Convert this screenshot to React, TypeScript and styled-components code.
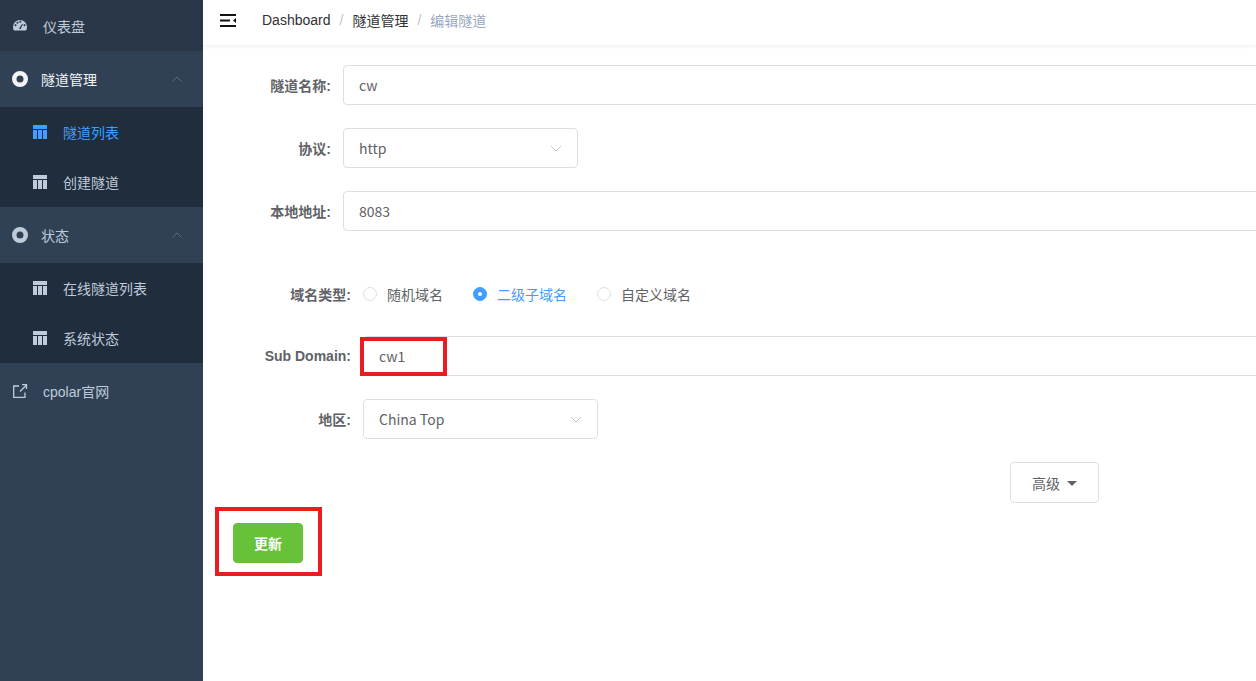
import React from 'react';
import styled, { createGlobalStyle } from 'styled-components';

const GlobalStyle = createGlobalStyle`
  html, body { margin: 0; padding: 0; height: 100%; background: #fff; }
  #root { height: 100%; }
  * { box-sizing: border-box; }
  body { font-family: "Liberation Sans", "Noto Sans CJK SC", sans-serif; overflow: hidden; }
`;

const Layout = styled.div`
  display: flex;
  width: 1256px;
  height: 681px;
  overflow: hidden;
`;

const Sidebar = styled.aside`
  width: 203px;
  flex: none;
  background: #304156;
  color: #bfcbd9;
  font-size: 14px;
`;

const TopItem = styled.div<{ $height?: number; $dark?: boolean; $offset?: number }>`
  display: flex;
  align-items: center;
  height: ${p => p.$height ?? 56}px;
  padding-left: 12px;
  background: ${p => (p.$dark ? '#2a3749' : 'transparent')};
  svg { flex: none; }
  span { margin-left: ${p => p.$offset ?? 15}px; }
`;

const GroupHead = styled.div<{ $active?: boolean }>`
  display: flex;
  align-items: center;
  height: 56px;
  padding-left: 12px;
  color: ${p => (p.$active ? '#f4f4f5' : '#bfcbd9')};
  span { margin-left: 13px; flex: 1; }
  svg:last-child { margin-right: 21px; }
`;

const SubList = styled.div`
  background: #1f2d3d;
`;

const SubItem = styled.div<{ $active?: boolean }>`
  display: flex;
  align-items: center;
  height: 50px;
  padding-left: 33px;
  color: ${p => (p.$active ? '#409eff' : '#bfcbd9')};
  span { margin-left: 16px; }
`;

const Main = styled.main`
  flex: 1;
  min-width: 0;
  position: relative;
  overflow: hidden;
`;

const Navbar = styled.header`
  display: flex;
  align-items: center;
  height: 45px;
  padding: 0 0 5px 17px;
  box-shadow: 0 1px 4px rgba(0, 21, 41, 0.08);
  font-size: 14px;
`;

const Crumbs = styled.nav`
  display: flex;
  align-items: center;
  margin-left: 25px;
  color: #303133;
`;

const Slash = styled.span`
  margin: 0 9px;
  color: #c0c4cc;
`;

const CurrentCrumb = styled.span`
  color: #97a8be;
`;

const Form = styled.form`
  padding-top: 20px;
  font-family: "Noto Sans CJK SC", "Noto Sans", sans-serif;
  font-size: 14px;
`;

const Row = styled.div<{ $gap?: number }>`
  display: flex;
  align-items: center;
  height: 40px;
  margin-bottom: ${p => p.$gap ?? 23}px;
`;

const Label = styled.label<{ $width: number }>`
  flex: none;
  width: ${p => p.$width}px;
  padding-right: 12px;
  text-align: right;
  font-weight: 700;
  color: #606266;
  font-family: "Liberation Sans", "Noto Sans CJK SC", sans-serif;
`;

const Input = styled.div`
  flex: 1;
  height: 40px;
  margin-right: -20px;
  padding: 0 15px;
  display: flex;
  align-items: center;
  background: #fff;
  border: 1px solid #dcdfe6;
  border-radius: 4px;
  color: #606266;
`;

const Select = styled.div`
  width: 235px;
  height: 40px;
  padding: 0 15px;
  display: flex;
  align-items: center;
  justify-content: space-between;
  border: 1px solid #dcdfe6;
  border-radius: 4px;
  color: #606266;
`;

const RadioGroup = styled.div`
  display: flex;
  gap: 30px;
`;

const Radio = styled.div<{ $checked?: boolean }>`
  display: flex;
  align-items: center;
  gap: 10px;
  color: ${p => (p.$checked ? '#409eff' : '#606266')};
`;

const RadioDot = styled.i<{ $checked?: boolean }>`
  display: flex;
  align-items: center;
  justify-content: center;
  width: 14px;
  height: 14px;
  border-radius: 50%;
  border: 1px solid ${p => (p.$checked ? '#409eff' : '#dcdfe6')};
  background: ${p => (p.$checked ? '#409eff' : '#fff')};
  &::after {
    content: '';
    width: 4px;
    height: 4px;
    border-radius: 50%;
    background: #fff;
  }
`;

const AdvancedRow = styled.div`
  display: flex;
  justify-content: flex-end;
  padding-right: 157px;
  margin-bottom: 20px;
`;

const AdvancedButton = styled.button`
  display: flex;
  align-items: center;
  justify-content: center;
  gap: 7px;
  width: 89px;
  height: 41px;
  padding: 0;
  background: #fff;
  border: 1px solid #dcdfe6;
  border-radius: 4px;
  color: #606266;
  font: inherit;
`;

const Caret = styled.i`
  width: 0;
  height: 0;
  margin-top: 1px;
  border-left: 5px solid transparent;
  border-right: 5px solid transparent;
  border-top: 5px solid #606266;
`;

const UpdateButton = styled.button`
  display: block;
  width: 70px;
  height: 40px;
  margin-left: 30px;
  padding: 0;
  background: #67c23a;
  border: 1px solid #67c23a;
  border-radius: 4px;
  color: #fff;
  font: inherit;
  font-weight: 700;
`;

const Highlight = styled.div<{ $left: number; $top: number; $width: number; $height: number }>`
  position: absolute;
  left: ${p => p.$left}px;
  top: ${p => p.$top}px;
  width: ${p => p.$width}px;
  height: ${p => p.$height}px;
  border: 4px solid #e91c20;
  pointer-events: none;
`;

const GaugeIcon = () => (
  <svg width="16" height="14" viewBox="0 0 16 14">
    <path
      fill="#bfcbd9"
      fillRule="evenodd"
      d="M8 1a7 7 0 0 0-7 7c0 1.400.3 2.500 1 3.500h12c.7-1 1-2.100 1-3.500a7 7 0 0 0-7-7zM3.500 7.200a1 1 0 1 1 .01 0zM5.500 4.700a1 1 0 1 1 .01 0zM8.300 3.800a1 1 0 1 1 .01 0zM12.500 7.200a1 1 0 1 1 .01 0zM7 9.500l3.300-4.800.7.400-2.500 5.200z"
    />
  </svg>
);

const RingIcon = ({ color }: { color: string }) => (
  <svg width="16" height="16" viewBox="0 0 16 16">
    <path
      fill={color}
      fillRule="evenodd"
      d="M8 0a8 8 0 1 0 0 16A8 8 0 0 0 8 0zm0 4.500a3.500 3.500 0 1 1 0 7 3.500 3.500 0 0 1 0-7z"
    />
  </svg>
);

const TableIcon = ({ color }: { color: string }) => (
  <svg width="14" height="14" viewBox="0 0 14 14">
    <path fill={color} d="M0 0h14v4H0zM0 5h4v9H0zM5 5h4v9H5zM10 5h4v9h-4z" />
  </svg>
);

const LinkIcon = () => (
  <svg width="16" height="16" viewBox="0 0 16 16" fill="none" stroke="#bfcbd9" strokeWidth="1.300">
    <path d="M7 3H1.700v11.300H13V9.500M8 8.500L14 2.500M10 1.700h4.500v4.300" />
  </svg>
);

const Chevron = ({ color }: { color: string }) => (
  <svg width="10" height="6" viewBox="0 0 10 6" fill="none" stroke={color} strokeWidth="1">
    <path d="M.5 5.500L5 1l4.500 4.500" />
  </svg>
);

const SelectArrow = () => (
  <svg width="12" height="7" viewBox="0 0 12 7" fill="none" stroke="#c0c4cc" strokeWidth="1">
    <path d="M1 1l5 5 5-5" />
  </svg>
);

const MenuToggle = () => (
  <svg width="17" height="15" viewBox="0 0 17 15">
    <path
      fill="#111"
      d="M0 1h16v2H0zM0 6.500h10v2H0zM0 12h16v2H0zM16 5v5l-3-2.500z"
    />
  </svg>
);

export default function App() {
  return (
    <Layout>
      <GlobalStyle />
      <Sidebar>
        <TopItem $height={51} $dark>
          <GaugeIcon />
          <span>仪表盘</span>
        </TopItem>
        <GroupHead $active>
          <RingIcon color="#f4f4f5" />
          <span>隧道管理</span>
          <Chevron color="#5d6b7d" />
        </GroupHead>
        <SubList>
          <SubItem $active>
            <TableIcon color="#409eff" />
            <span>隧道列表</span>
          </SubItem>
          <SubItem>
            <TableIcon color="#bfcbd9" />
            <span>创建隧道</span>
          </SubItem>
        </SubList>
        <GroupHead>
          <RingIcon color="#bfcbd9" />
          <span>状态</span>
          <Chevron color="#5d6b7d" />
        </GroupHead>
        <SubList>
          <SubItem>
            <TableIcon color="#bfcbd9" />
            <span>在线隧道列表</span>
          </SubItem>
          <SubItem>
            <TableIcon color="#bfcbd9" />
            <span>系统状态</span>
          </SubItem>
        </SubList>
        <TopItem>
          <LinkIcon />
          <span>cpolar官网</span>
        </TopItem>
      </Sidebar>
      <Main>
        <Navbar>
          <MenuToggle />
          <Crumbs>
            <span>Dashboard</span>
            <Slash>/</Slash>
            <span>隧道管理</span>
            <Slash>/</Slash>
            <CurrentCrumb>编辑隧道</CurrentCrumb>
          </Crumbs>
        </Navbar>
        <Form>
          <Row>
            <Label $width={140}>隧道名称:</Label>
            <Input>cw</Input>
          </Row>
          <Row>
            <Label $width={140}>协议:</Label>
            <Select>
              http
              <SelectArrow />
            </Select>
          </Row>
          <Row $gap={43}>
            <Label $width={140}>本地地址:</Label>
            <Input>8083</Input>
          </Row>
          <Row $gap={22}>
            <Label $width={160}>域名类型:</Label>
            <RadioGroup>
              <Radio>
                <RadioDot />
                随机域名
              </Radio>
              <Radio $checked>
                <RadioDot $checked />
                二级子域名
              </Radio>
              <Radio>
                <RadioDot />
                自定义域名
              </Radio>
            </RadioGroup>
          </Row>
          <Row>
            <Label $width={160}>Sub Domain:</Label>
            <Input>cw1</Input>
          </Row>
          <Row>
            <Label $width={160}>地区:</Label>
            <Select>
              China Top
              <SelectArrow />
            </Select>
          </Row>
          <AdvancedRow>
            <AdvancedButton type="button">
              高级
              <Caret />
            </AdvancedButton>
          </AdvancedRow>
          <UpdateButton type="button">更新</UpdateButton>
        </Form>
        <Highlight $left={157} $top={337} $width={87} $height={39} />
        <Highlight $left={12} $top={507} $width={107} $height={69} />
      </Main>
    </Layout>
  );
}
